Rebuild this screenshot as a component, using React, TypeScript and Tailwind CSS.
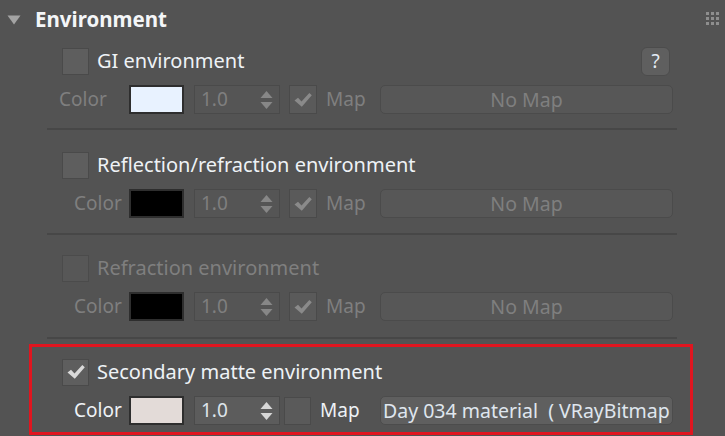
import React from "react";

const FONT = { fontFamily: '"Noto Sans", "Open Sans", sans-serif' };

function Check({ color }: { color: string }) {
  return (
    <svg width="20" height="18" viewBox="0 0 20 18">
      <path d="M1.5 9.5 L5 6.8 L8.5 10.5 L16.3 2 L18.8 4.3 L8.8 15.8 Z" fill={color} />
    </svg>
  );
}

function Arrows({ color }: { color: string }) {
  return (
    <svg width="13" height="20" viewBox="0 0 13 20">
      <path d="M6.5 1 L12.5 8 L0.5 8 Z" fill={color} />
      <path d="M0.5 12 L12.5 12 L6.5 19 Z" fill={color} />
    </svg>
  );
}

type RowProps = {
  label: string;
  labelActive: boolean;
  cbChecked: boolean;
  cbDisabled?: boolean;
  colorLabelLeft?: boolean;
  swatch: string;
  active: boolean;
  mapChecked: boolean;
  mapText: string;
  help?: boolean;
  secondary?: boolean;
};

function Rows(p: RowProps) {
  const dim = "text-[#7f7f7f]";
  const bright = "text-[#eef2f6]";
  return (
    <>
      <div className="flex items-center h-[26px]">
        <div
          className={
            p.cbDisabled
              ? "w-[27px] h-[27px] border border-[#4b4b4b] bg-[#575757] flex items-center justify-center"
              : "w-[27px] h-[27px] border border-[#4a4a4a] bg-[#5e5e5e] flex items-center justify-center"
          }
        >
          {p.cbChecked && <Check color="#d9d9d9" />}
        </div>
        <span className={"ml-[8px] text-[20px] leading-none " + (p.labelActive ? bright : dim)}>
          {p.label}
        </span>
        {p.help && (
          <div className="ml-auto mr-[3px] w-[29px] h-[29px] rounded-[6px] bg-[#5f5f5f] border border-[#4c4c4c] flex items-center justify-center text-[19px] text-[#e4ecf4] leading-none">
            ?
          </div>
        )}
      </div>
      <div className="flex items-center h-[29px] mt-[11px]">
        <div className={"w-[70px] -ml-[3px] " + (p.colorLabelLeft ? "" : "pl-[15px]")}>
          <span className={"text-[19px] leading-none " + (p.active ? bright : dim)}>Color</span>
        </div>
        <div className="w-[55px] h-[29px] border-2 border-[#2e2e2e]" style={{ backgroundColor: p.swatch }} />
        <div
          className={
            "ml-[10px] w-[86px] h-[29px] border border-[#4a4a4a] flex items-center pl-[6px] pr-[6px] " +
            (p.active ? "bg-[#5c5c5c]" : "bg-[#555555]")
          }
        >
          <span className={"text-[19px] leading-none " + (p.active ? "text-[#dde4ea]" : dim)}>1.0</span>
          <div className="ml-auto flex items-center">
            <Arrows color={p.active ? "#d6d6d6" : "#878787"} />
          </div>
        </div>
        <div
          className={
            (p.secondary ? "ml-[4px] w-[27px] h-[28px]" : "ml-[9px] w-[28px] h-[29px]") +
            " border border-[#4a4a4a] bg-[#5a5a5a] flex items-center justify-center"
          }
        >
          {p.mapChecked && <Check color="#8a8a8a" />}
        </div>
        <span className={"ml-[9px] text-[19px] leading-none " + (p.active ? bright : dim)}>Map</span>
        <div
          className={
            "ml-auto w-[293px] h-[29px] rounded-[5px] border flex items-center overflow-hidden whitespace-pre " +
            (p.active
              ? "bg-[#5f5f5f] border-[#4c4c4c] justify-start pl-[2px]"
              : "bg-[#575757] border-[#4b4b4b] justify-center")
          }
        >
          <span className={"shrink-0 text-[19.5px] leading-none " + (p.active ? "text-[#dfe6ee]" : dim)}>
            {p.mapText}
          </span>
        </div>
      </div>
    </>
  );
}

export default function App() {
  return (
    <div className="w-[725px] h-[436px] bg-[#535353] overflow-hidden" style={FONT}>
      <div className="flex items-center h-[40px] pl-[7px]">
        <svg width="14" height="10" viewBox="0 0 14 10">
          <path d="M0.5 0.5 L13.5 0.5 L7 9.5 Z" fill="#a3a3a3" />
        </svg>
        <span className="ml-[14px] text-[20.5px] font-bold text-[#f4f6f8] leading-none -mt-[2px]">Environment</span>
        <div className="ml-auto mr-[6px] -mt-[4px] grid grid-cols-3 gap-[2px]">
          {Array.from({ length: 9 }).map((_, i) => (
            <div key={i} className="w-[3px] h-[3px] bg-[#8e8e8e]" />
          ))}
        </div>
      </div>

      <div className="ml-[47px] w-[630px]">
        <div className="pt-[8px] pb-[14px] pl-[15px] pr-[4px] border-b-2 border-[#474747]">
          <Rows
            label="GI environment"
            labelActive
            cbChecked={false}
            colorLabelLeft
            swatch="#e8f2ff"
            active={false}
            mapChecked
            mapText="No Map"
            help
          />
        </div>
        <div className="pt-[22px] pb-[15px] pl-[15px] pr-[4px] border-b-2 border-[#474747]">
          <Rows
            label="Reflection/refraction environment"
            labelActive
            cbChecked={false}
            swatch="#000000"
            active={false}
            mapChecked
            mapText="No Map"
          />
        </div>
        <div className="pt-[20px] pb-[16px] pl-[15px] pr-[4px] border-b-2 border-[#474747]">
          <Rows
            label="Refraction environment"
            labelActive={false}
            cbChecked={false}
            cbDisabled
            swatch="#000000"
            active={false}
            mapChecked
            mapText="No Map"
          />
        </div>
      </div>

      <div className="mt-[5px] ml-[29px] w-[664px] border-[3px] border-[#e0151f] pt-[12px] pb-[7px] pl-[30px] pr-[17px]">
        <Rows
          label="Secondary matte environment"
          labelActive
          cbChecked
          swatch="#e3dbd8"
          active
          mapChecked={false}
          mapText="Day 034 material  ( VRayBitmap )"
          secondary
        />
      </div>
    </div>
  );
}
